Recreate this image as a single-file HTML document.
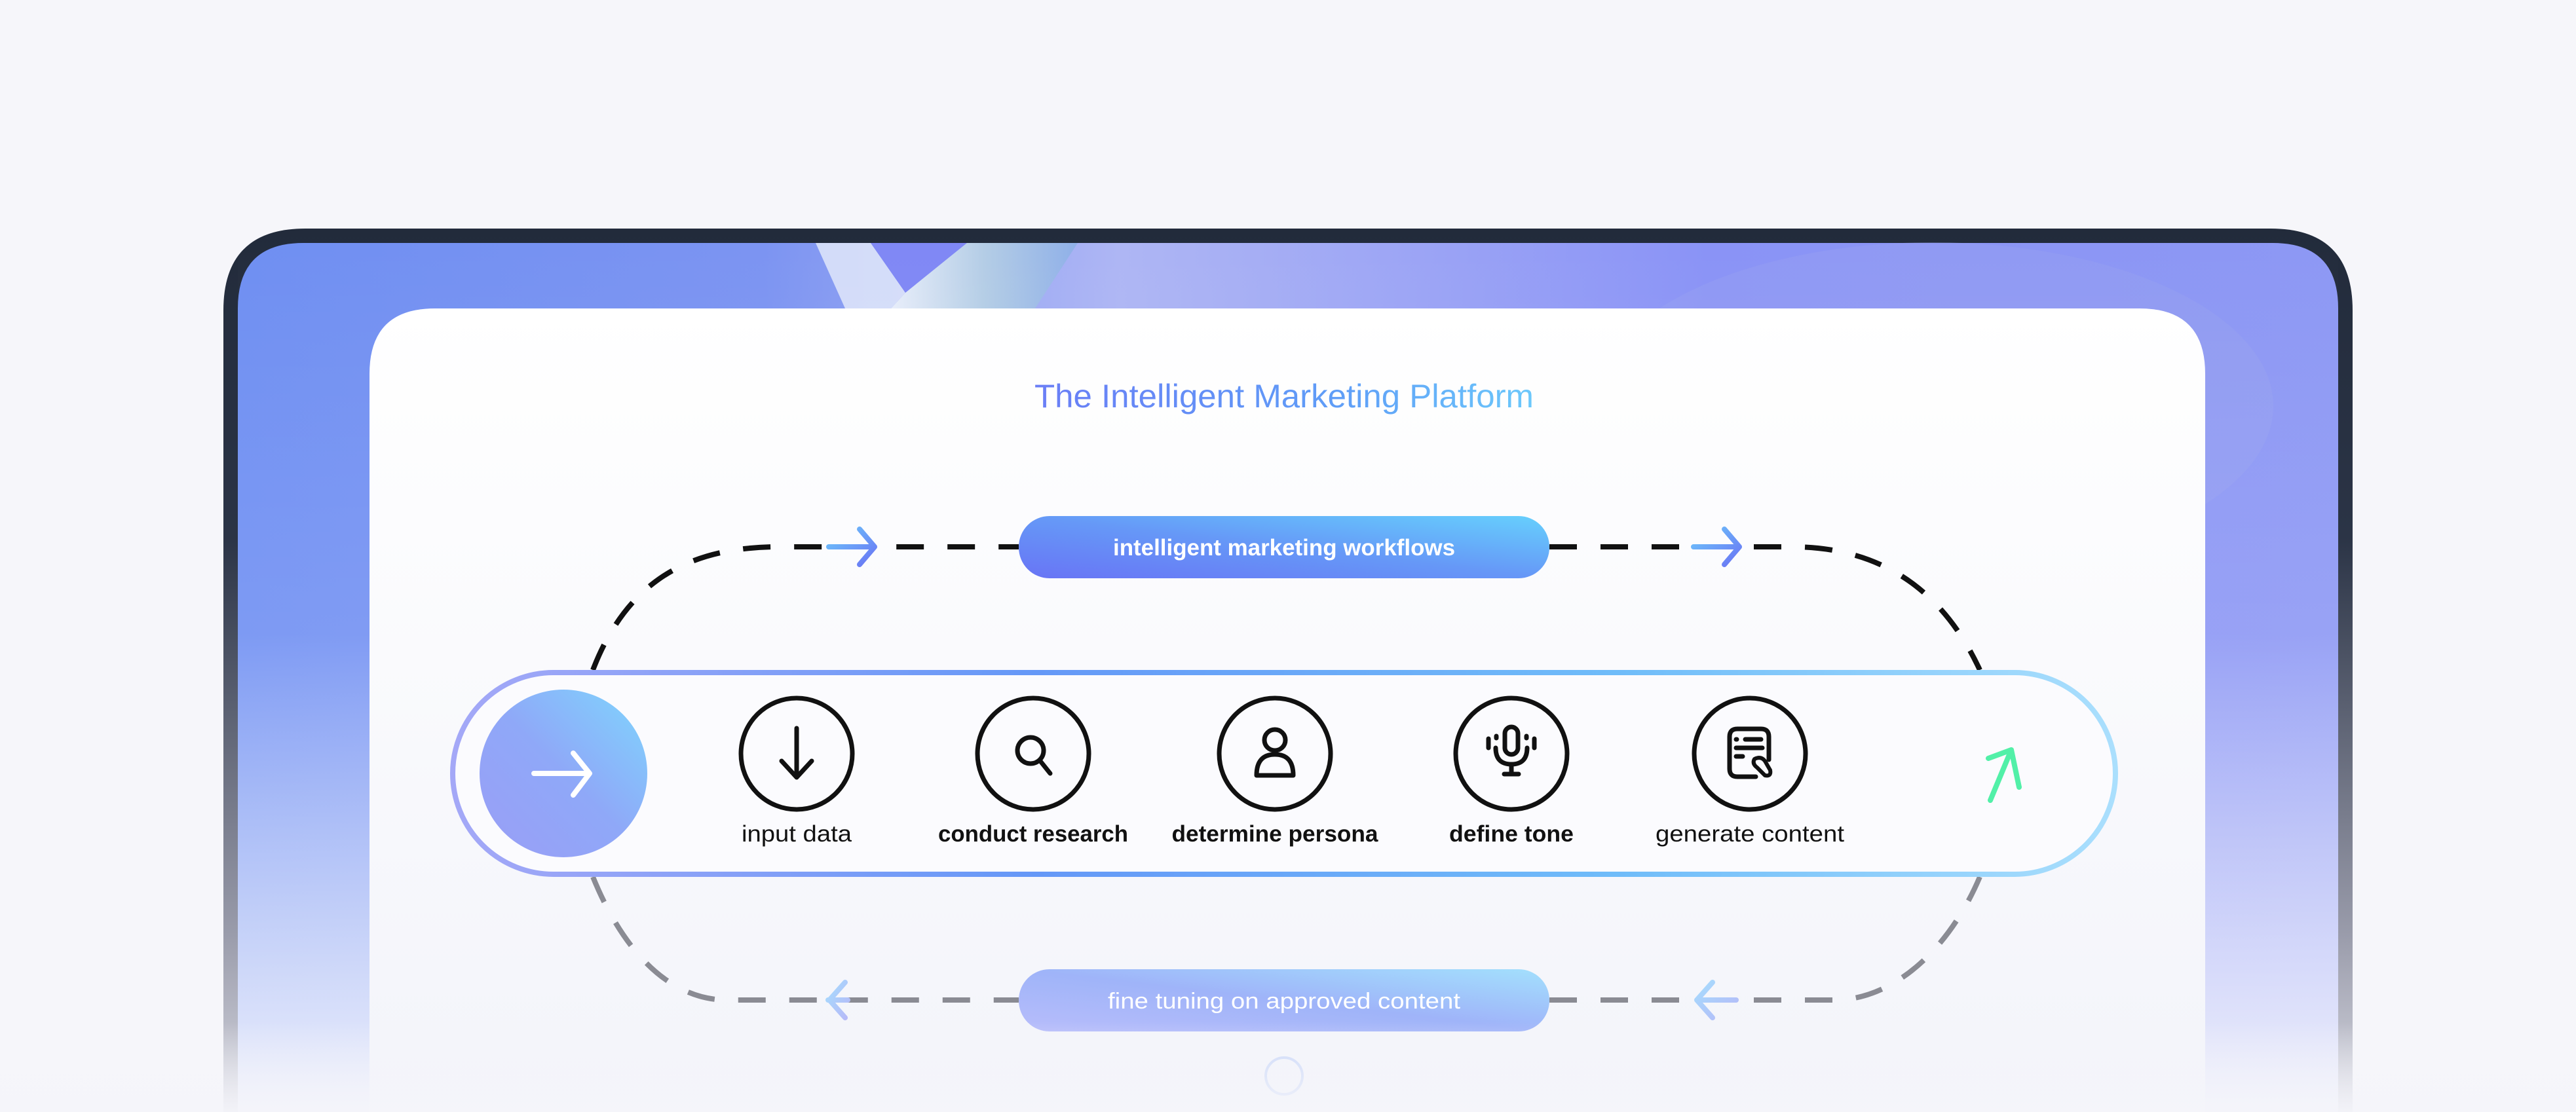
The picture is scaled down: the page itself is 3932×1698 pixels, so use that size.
<!DOCTYPE html>
<html><head><meta charset="utf-8"><style>
html,body{margin:0;padding:0;background:#f5f5fa;}
svg{display:block}
</style></head><body>
<svg width="3932" height="1698" viewBox="0 0 3932 1698" xmlns="http://www.w3.org/2000/svg" font-family="Liberation Sans, sans-serif">
<defs>
<linearGradient id="frame" x1="0" y1="0" x2="0" y2="1">
<stop offset="0" stop-color="#222b3b"/><stop offset="0.35" stop-color="#2b3446"/><stop offset="0.8" stop-color="#9a9cab"/><stop offset="1" stop-color="#d8d9e2"/>
</linearGradient>
<linearGradient id="scr" x1="0" y1="0" x2="1" y2="0">
<stop offset="0" stop-color="#6f8ff2"/><stop offset="0.25" stop-color="#7c94f2"/><stop offset="0.42" stop-color="#aeb6f4"/><stop offset="0.7" stop-color="#8a93f6"/><stop offset="1" stop-color="#8d98f4"/>
</linearGradient>
<linearGradient id="scrfade" x1="0" y1="0" x2="0" y2="1">
<stop offset="0" stop-color="#ffffff" stop-opacity="0"/><stop offset="0.45" stop-color="#ffffff" stop-opacity="0.1"/><stop offset="1" stop-color="#f3f4fb" stop-opacity="0.95"/>
</linearGradient>
<linearGradient id="streak" x1="0" y1="0" x2="1" y2="0">
<stop offset="0" stop-color="#e8eefa"/><stop offset="0.5" stop-color="#b4cde6"/><stop offset="1" stop-color="#8fb0e8"/>
</linearGradient>
<linearGradient id="card" x1="0" y1="0" x2="0" y2="1">
<stop offset="0" stop-color="#ffffff"/><stop offset="1" stop-color="#f3f4fa"/>
</linearGradient>
<linearGradient id="title" x1="0" y1="0" x2="1" y2="0">
<stop offset="0" stop-color="#6a7ef6"/><stop offset="0.6" stop-color="#5f9df7"/><stop offset="1" stop-color="#6cc8fb"/>
</linearGradient>
<linearGradient id="pill1" x1="0" y1="1" x2="1" y2="0">
<stop offset="0" stop-color="#6874f5"/><stop offset="0.5" stop-color="#6698f7"/><stop offset="1" stop-color="#66d0fd"/>
</linearGradient>
<linearGradient id="pill2" x1="0" y1="1" x2="1" y2="0">
<stop offset="0" stop-color="#b8bdfa"/><stop offset="0.5" stop-color="#9fb4f9"/><stop offset="1" stop-color="#a3e0fd"/>
</linearGradient>
<linearGradient id="bar" x1="0" y1="0" x2="1" y2="0">
<stop offset="0" stop-color="#a4a8f7"/><stop offset="0.35" stop-color="#6598f7"/><stop offset="0.7" stop-color="#6fbcf9"/><stop offset="1" stop-color="#aadffd"/>
</linearGradient>
<linearGradient id="big" x1="0" y1="1" x2="1" y2="0">
<stop offset="0" stop-color="#9a9ef6"/><stop offset="0.5" stop-color="#8fa8f8"/><stop offset="1" stop-color="#7fd6fd"/>
</linearGradient>
<linearGradient id="arr" x1="0" y1="0" x2="1" y2="1">
<stop offset="0" stop-color="#6cc8fb"/><stop offset="1" stop-color="#6a74f4"/>
</linearGradient>
<linearGradient id="arr2" x1="0" y1="0" x2="1" y2="1">
<stop offset="0" stop-color="#a6dcfd"/><stop offset="1" stop-color="#b6b9f8"/>
</linearGradient>
<linearGradient id="pagefade" x1="0" y1="0" x2="0" y2="1">
<stop offset="0" stop-color="#f5f5fa" stop-opacity="0"/><stop offset="1" stop-color="#f5f5fa" stop-opacity="0.9"/>
</linearGradient>
</defs>
<rect width="3932" height="1698" fill="#f6f6fa"/>
<!-- device -->
<path d="M341,1698 V474 Q341,349 466,349 H3466 Q3591,349 3591,474 V1698 Z" fill="url(#frame)"/>
<path d="M363,1698 V471 Q363,371 463,371 H3469 Q3569,371 3569,471 V1698 Z" fill="url(#scr)"/>
<!-- decorative shapes -->
<path d="M1245,371 L1329,371 L1382,447 L1360,471 L1290,471 Z" fill="#e6ecfa" opacity="0.8"/>
<path d="M1329,371 L1382,447 L1476,371 Z" fill="#8088f5"/>
<path d="M1476,371 L1645,371 L1580,471 L1360,471 L1382,447 Z" fill="url(#streak)"/>
<ellipse cx="2950" cy="620" rx="520" ry="250" fill="#9aa6ee" opacity="0.3"/>
<path d="M363,371 H3569 V1698 H363 Z" fill="url(#scrfade)"/>
<!-- card -->
<path d="M564,1698 V571 Q564,471 664,471 H3266 Q3366,471 3366,571 V1698 Z" fill="url(#card)"/>
<text x="1960" y="622" font-size="50" text-anchor="middle" fill="url(#title)" textLength="762" lengthAdjust="spacingAndGlyphs">The Intelligent Marketing Platform</text>
<!-- dashed loop -->
<g fill="none" stroke-width="8" stroke-dasharray="42 36">
<path d="M905,1023 C960,880 1060,835 1190,835 L1555,835" stroke="#111"/>
<path d="M2365,835 L2735,835 C2870,835 2965,900 3022,1023" stroke="#111"/>
<path d="M905,1339 C950,1450 1020,1527 1110,1527 L1555,1527" stroke="#8a8b93"/>
<path d="M2365,1527 L2800,1527 C2890,1527 2975,1450 3022,1339" stroke="#8a8b93"/>
</g>
<!-- small arrows -->
<g fill="none" stroke-width="8" stroke-linecap="round" stroke-linejoin="round">
<path d="M1265,835 H1335 M1312,808 L1335,835 L1312,862" stroke="url(#arr)"/>
<path d="M2585,835 H2655 M2632,808 L2655,835 L2632,862" stroke="url(#arr)"/>
<path d="M1294,1527 H1264 M1290,1500 L1266,1527 L1290,1554" stroke="url(#arr2)"/>
<path d="M2650,1527 H2590 M2614,1500 L2590,1527 L2614,1554" stroke="url(#arr2)"/>
</g>
<!-- pills -->
<rect x="1555" y="788" width="810" height="95" rx="47" fill="url(#pill1)"/>
<text x="1960" y="848" font-size="35" fill="#fff" text-anchor="middle" font-weight="bold" textLength="522" lengthAdjust="spacingAndGlyphs">intelligent marketing workflows</text>
<rect x="1555" y="1480" width="810" height="95" rx="47" fill="url(#pill2)"/>
<text x="1960" y="1540" font-size="34" fill="#fff" text-anchor="middle" textLength="538" lengthAdjust="spacingAndGlyphs">fine tuning on approved content</text>
<!-- main bar -->
<rect x="691" y="1027" width="2538" height="308" rx="154" fill="#fbfbfe" stroke="url(#bar)" stroke-width="8"/>
<circle cx="860" cy="1181" r="128" fill="url(#big)"/>
<path d="M815,1181 H900 M875,1150 L900,1181 L875,1214" fill="none" stroke="#fff" stroke-width="8" stroke-linecap="round" stroke-linejoin="round"/>
<!-- icons -->
<g fill="none" stroke="#111" stroke-width="7" stroke-linecap="round" stroke-linejoin="round">
<circle cx="1216" cy="1151" r="85"/>
<path d="M1216,1112 V1185 M1193,1162 L1216,1187 L1239,1162"/>
<circle cx="1577" cy="1151" r="85"/>
<circle cx="1573" cy="1146" r="20"/>
<path d="M1587,1161 L1603,1181"/>
<circle cx="1946" cy="1151" r="85"/>
<circle cx="1946" cy="1130" r="16"/>
<path d="M1918,1184 Q1918,1152 1946,1152 Q1974,1152 1974,1184 Z"/>
<circle cx="2307" cy="1151" r="85"/>
<rect x="2297" y="1110" width="20" height="42" rx="10"/>
<path d="M2283,1142 Q2283,1167 2307,1167 Q2331,1167 2331,1142 M2307,1167 V1180 M2296,1182 H2318 M2272,1128 V1142 M2342,1128 V1142 M2284,1124 V1127 M2330,1124 V1127"/>
<circle cx="2671" cy="1151" r="85"/>
<path d="M2680,1186 H2652 Q2640,1186 2640,1174 V1125 Q2640,1113 2652,1113 H2688 Q2700,1113 2700,1125 V1160"/>
<path d="M2650,1129 H2651 M2664,1129 H2688 M2650,1142 H2690 M2650,1155 H2660"/>
<path d="M2678,1159 Q2688,1154 2694,1162 L2702,1176 Q2704,1186 2694,1184 L2682,1172 Q2674,1166 2678,1159 Z" stroke-width="6"/>
</g>
<g font-size="35" fill="#111" text-anchor="middle" font-weight="bold">
<text x="1216" y="1285" font-weight="normal" textLength="168" lengthAdjust="spacingAndGlyphs">input data</text>
<text x="1577" y="1285" textLength="290" lengthAdjust="spacingAndGlyphs">conduct research</text>
<text x="1946" y="1285" textLength="315" lengthAdjust="spacingAndGlyphs">determine persona</text>
<text x="2307" y="1285" textLength="190" lengthAdjust="spacingAndGlyphs">define tone</text>
<text x="2671" y="1285" font-weight="normal" textLength="288" lengthAdjust="spacingAndGlyphs">generate content</text>
</g>
<path d="M3038,1222 L3070,1145 L3082,1202 M3070,1145 L3035,1158" fill="none" stroke="#52f0a8" stroke-width="8" stroke-linecap="round" stroke-linejoin="round"/>
<!-- home button -->
<circle cx="1960" cy="1643" r="28" fill="none" stroke="#c8d6f8" stroke-width="4"/>
<rect x="0" y="1560" width="3932" height="138" fill="url(#pagefade)"/>
</svg>
</body></html>
